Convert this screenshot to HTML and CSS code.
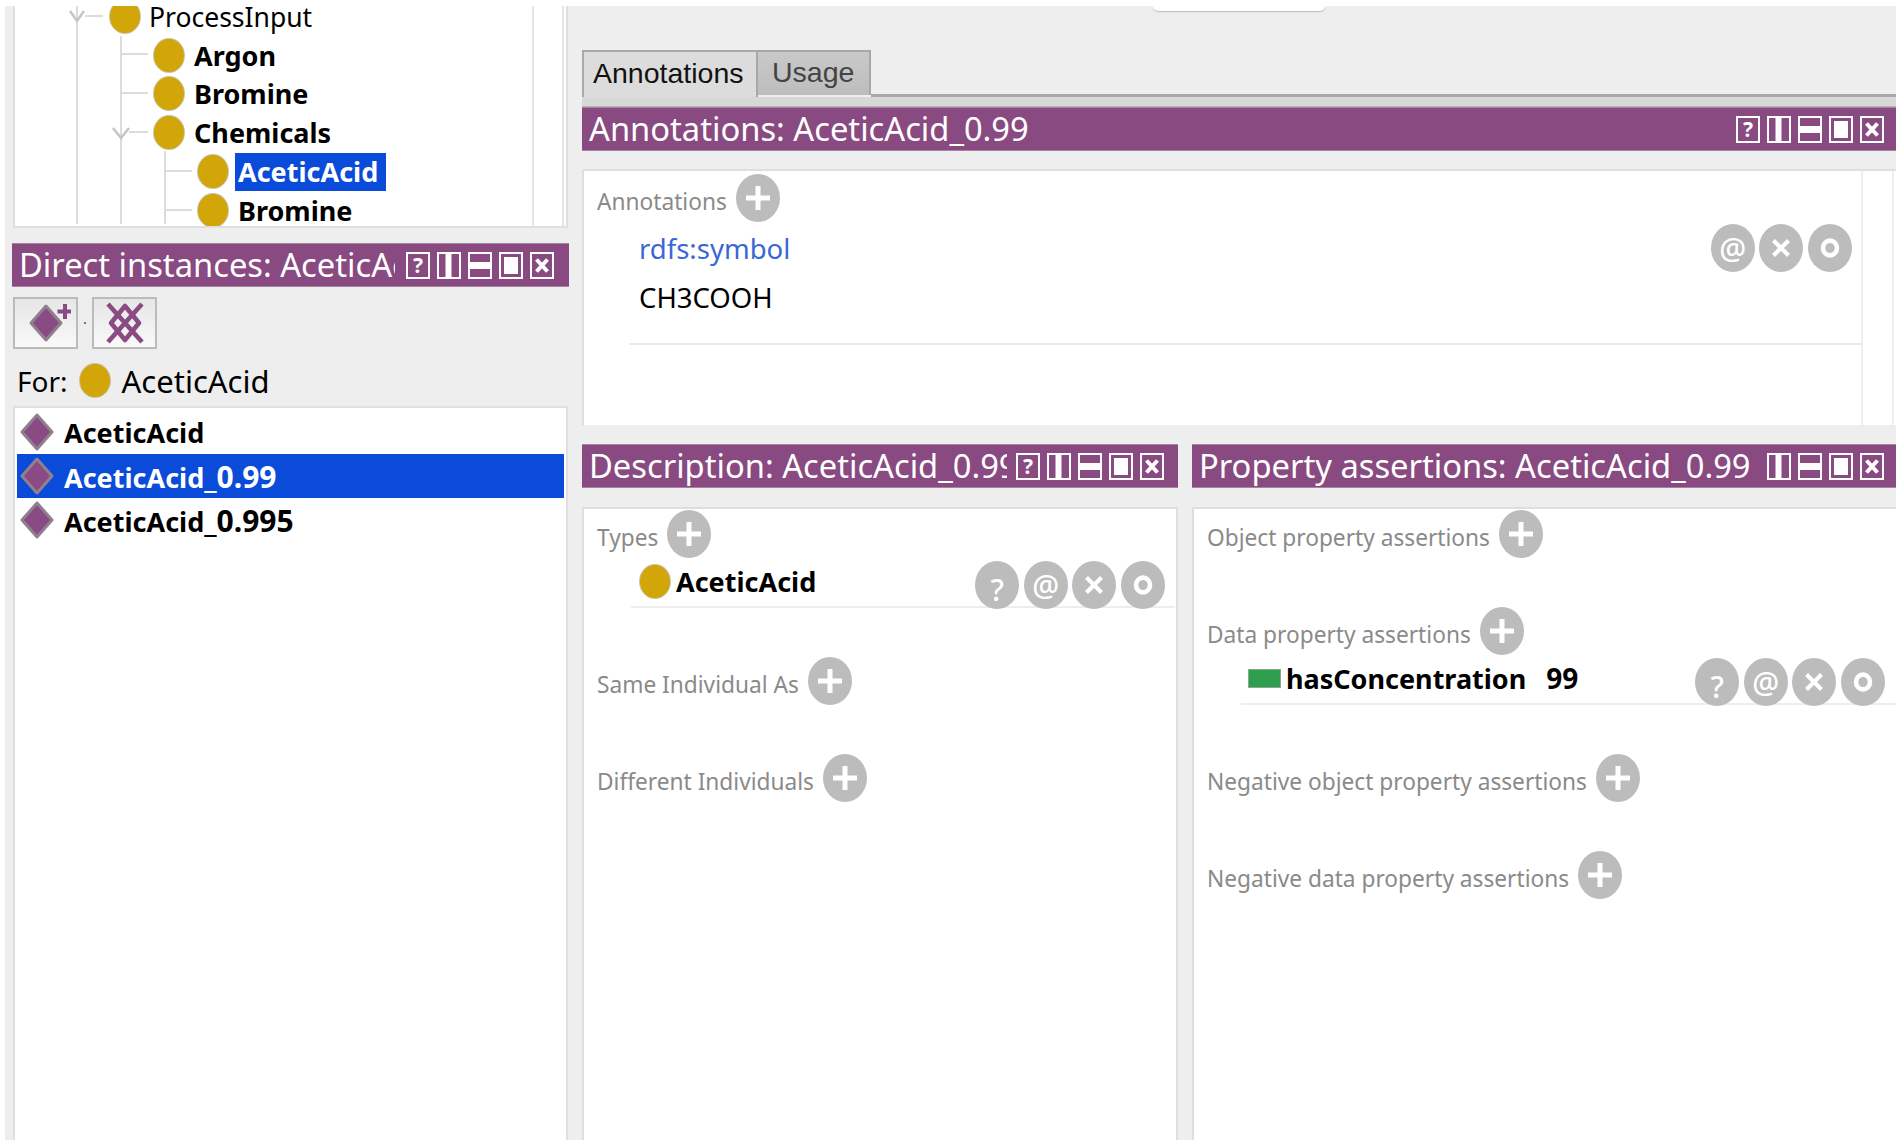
FILE: index.html
```html
<!DOCTYPE html>
<html lang="en">
<head>
<meta charset="utf-8">
<title>Protege individuals</title>
<link rel="stylesheet" href="styles.css">
</head>
<body>
<svg class="defs" width="0" height="0" aria-hidden="true">
  <defs>
    <symbol id="b-help" viewBox="0 0 24 27"><rect x="1" y="1" width="22" height="25" fill="none" stroke="#fff" stroke-width="2"/><text x="12" y="21" text-anchor="middle" class="help-glyph">?</text></symbol>
    <symbol id="b-col" viewBox="0 0 24 27"><rect x="1" y="1" width="22" height="25" fill="none" stroke="#fff" stroke-width="2"/><rect x="8.5" y="2" width="6" height="23" fill="#fff"/></symbol>
    <symbol id="b-row" viewBox="0 0 24 27"><rect x="1" y="1" width="22" height="25" fill="none" stroke="#fff" stroke-width="2"/><rect x="2" y="10" width="20" height="7" fill="#fff"/></symbol>
    <symbol id="b-max" viewBox="0 0 24 27"><rect x="1" y="1" width="22" height="25" fill="none" stroke="#fff" stroke-width="2"/><rect x="5" y="5" width="14" height="17" fill="#fff"/></symbol>
    <symbol id="b-close" viewBox="0 0 24 27"><rect x="1" y="1" width="22" height="25" fill="none" stroke="#fff" stroke-width="2"/><path d="M6.5 7.5 L17.5 19.5 M17.5 7.5 L6.5 19.5" stroke="#fff" stroke-width="4" fill="none"/></symbol>
    <symbol id="p-x" viewBox="0 0 20 20"><path d="M2.5 2.5 L17.5 17.5 M17.5 2.5 L2.5 17.5" stroke="#fff" stroke-width="4.2" fill="none"/></symbol>
    <symbol id="p-o" viewBox="0 0 20 20"><ellipse cx="10" cy="10" rx="7" ry="7.4" stroke="#fff" stroke-width="4.6" fill="none"/></symbol>
    <symbol id="p-plus" viewBox="0 0 26 26"><path d="M13 1 V25 M1 13 H25" stroke="#fff" stroke-width="5" fill="none"/></symbol>
    <symbol id="diamond" viewBox="0 0 36 40"><polygon points="18,3 33,20 18,37 3,20" fill="#8a4b85" stroke="#8f7f8f" stroke-width="3" stroke-linejoin="round"/></symbol>
  </defs>
</svg>

<div class="app">
  <aside class="left">
    <div class="tree">
      <svg class="guides" width="540" height="221" aria-hidden="true">
        <path d="M62 0 V218 M106 30 V218 M150 145 V218 M70 10 H88 M106 48 H133 M106 87 H133 M114 126 H133 M150 165 H177 M150 204 H177" stroke="#dcdcdc" stroke-width="2" fill="none"/>
        <path d="M55 5 L62 15 L69 5 M98 122 L106 132 L114 122" stroke="#c4c4c4" stroke-width="2.4" fill="none"/>
      </svg>
      <div class="tree-row lvl1"><i class="cls"></i><span class="plain">ProcessInput</span></div>
      <div class="tree-row lvl2"><i class="cls"></i><b>Argon</b></div>
      <div class="tree-row lvl2"><i class="cls"></i><b>Bromine</b></div>
      <div class="tree-row lvl2"><i class="cls"></i><b>Chemicals</b></div>
      <div class="tree-row lvl3"><i class="cls"></i><b class="tree-sel">AceticAcid</b></div>
      <div class="tree-row lvl3"><i class="cls"></i><b>Bromine</b></div>
      <div class="tree-edge"></div>
    </div>

    <div class="bar bar-left">
      <span class="bar-title">Direct instances: AceticAcid</span>
      <svg class="bb"><use href="#b-help"/></svg><svg class="bb"><use href="#b-col"/></svg><svg class="bb"><use href="#b-row"/></svg><svg class="bb"><use href="#b-max"/></svg><svg class="bb"><use href="#b-close"/></svg>
    </div>

    <div class="tools">
      <button class="tool" aria-label="Add individual">
        <svg width="50" height="44" viewBox="0 0 50 44"><use href="#diamond" x="7" y="2" width="36" height="40"/><path d="M44 3 V18 M36.5 10.5 H51.5" stroke="#8a4b85" stroke-width="4" fill="none"/></svg>
      </button>
      <span class="tool-dot"></span>
      <button class="tool" aria-label="Delete individual">
        <svg width="38" height="42" viewBox="0 0 38 42"><path d="M2 2 L36 40 M2 40 L36 2" stroke="#8a4b85" stroke-width="4.6" fill="none"/><polygon points="19,4 33,21 19,38 5,21" stroke="#8a4b85" stroke-width="4.6" fill="none" stroke-linejoin="round"/></svg>
      </button>
    </div>

    <div class="for"><span class="for-lbl">For:</span><i class="cls"></i><span>AceticAcid</span></div>

    <ul class="list">
      <li class="ind"><svg class="dia"><use href="#diamond"/></svg><b>AceticAcid</b></li>
      <li class="ind ind-sel"><svg class="dia"><use href="#diamond"/></svg><b class="light">AceticAcid<span class="dg">_0.99</span></b></li>
      <li class="ind"><svg class="dia"><use href="#diamond"/></svg><b>AceticAcid<span class="dg">_0.995</span></b></li>
    </ul>
  </aside>

  <main class="right">
    <div class="knob"></div>
    <div class="tabs">
      <div class="tab tab-on">Annotations</div>
      <div class="tab">Usage</div>
      <div class="tab-fill"></div>
    </div>
    <div class="tab-strip"></div>

    <div class="bar bar-wide">
      <span class="bar-title">Annotations: AceticAcid_0.99</span>
      <svg class="bb"><use href="#b-help"/></svg><svg class="bb"><use href="#b-col"/></svg><svg class="bb"><use href="#b-row"/></svg><svg class="bb"><use href="#b-max"/></svg><svg class="bb"><use href="#b-close"/></svg>
    </div>

    <section class="annot">
      <div class="annot-main">
        <div class="head"><span class="lbl">Annotations</span><span class="pill plus"><svg><use href="#p-plus"/></svg></span></div>
        <div class="annot-row">
          <div class="annot-text">
            <div class="prop">rdfs:symbol</div>
            <div class="val">CH3COOH</div>
          </div>
          <div class="pills">
            <span class="pill">@</span>
            <span class="pill"><svg class="gl"><use href="#p-x"/></svg></span>
            <span class="pill"><svg class="gl"><use href="#p-o"/></svg></span>
          </div>
        </div>
      </div>
      <div class="annot-scroll"></div>
    </section>

    <div class="lower">
      <div class="pane pane-desc">
        <div class="bar bar-desc">
          <span class="bar-title">Description: AceticAcid_0.99</span>
          <svg class="bb"><use href="#b-help"/></svg><svg class="bb"><use href="#b-col"/></svg><svg class="bb"><use href="#b-row"/></svg><svg class="bb"><use href="#b-max"/></svg><svg class="bb"><use href="#b-close"/></svg>
        </div>
        <div class="card">
          <div class="sec">
            <div class="head"><span class="lbl">Types</span><span class="pill plus"><svg><use href="#p-plus"/></svg></span></div>
            <div class="frame frame-type">
              <i class="cls"></i><b>AceticAcid</b>
              <div class="pills">
                <span class="pill low">?</span>
                <span class="pill">@</span>
                <span class="pill"><svg class="gl"><use href="#p-x"/></svg></span>
                <span class="pill"><svg class="gl"><use href="#p-o"/></svg></span>
              </div>
            </div>
          </div>
          <div class="sec">
            <div class="head"><span class="lbl">Same Individual As</span><span class="pill plus"><svg><use href="#p-plus"/></svg></span></div>
          </div>
          <div class="sec">
            <div class="head"><span class="lbl">Different Individuals</span><span class="pill plus"><svg><use href="#p-plus"/></svg></span></div>
          </div>
        </div>
      </div>

      <div class="pane pane-prop">
        <div class="bar bar-prop">
          <span class="bar-title">Property assertions: AceticAcid_0.99</span>
          <svg class="bb"><use href="#b-col"/></svg><svg class="bb"><use href="#b-row"/></svg><svg class="bb"><use href="#b-max"/></svg><svg class="bb"><use href="#b-close"/></svg>
        </div>
        <div class="card">
          <div class="sec">
            <div class="head"><span class="lbl">Object property assertions</span><span class="pill plus"><svg><use href="#p-plus"/></svg></span></div>
          </div>
          <div class="sec">
            <div class="head"><span class="lbl">Data property assertions</span><span class="pill plus"><svg><use href="#p-plus"/></svg></span></div>
            <div class="frame frame-data">
              <i class="dp"></i><b>hasConcentration</b><b class="num">99</b>
              <div class="pills">
                <span class="pill low">?</span>
                <span class="pill">@</span>
                <span class="pill"><svg class="gl"><use href="#p-x"/></svg></span>
                <span class="pill"><svg class="gl"><use href="#p-o"/></svg></span>
              </div>
            </div>
          </div>
          <div class="sec">
            <div class="head"><span class="lbl">Negative object property assertions</span><span class="pill plus"><svg><use href="#p-plus"/></svg></span></div>
          </div>
          <div class="sec">
            <div class="head"><span class="lbl">Negative data property assertions</span><span class="pill plus"><svg><use href="#p-plus"/></svg></span></div>
          </div>
        </div>
      </div>
    </div>
  </main>
</div>
</body>
</html>
```

FILE: styles.css
```css
* { box-sizing: border-box; }
html, body { margin: 0; padding: 0; background: #fff; }
body { font-family: "Noto Sans", "Open Sans", sans-serif; color: #000; overflow: hidden; }
.defs { position: absolute; }
.help-glyph { font: 700 21px "Noto Sans", sans-serif; fill: #fff; }

.app { width: 1891px; height: 1134px; margin: 6px 0 0 5px; background: #eee; display: flex; overflow: hidden; }

/* left column */
.left { width: 564px; padding-left: 8px; display: flex; flex-direction: column; flex: none; }
.tree { position: relative; height: 222px; background: #fff; border: 2px solid #e0e0e0; border-top: 0; overflow: hidden; flex: none; width: 555px; font-size: 27px; }
.guides { position: absolute; left: 0; top: 0; }
.tree-edge { position: absolute; right: 2px; top: 0; bottom: 0; width: 32px; border-left: 2px solid #e6e6e6; border-right: 2px solid #e6e6e6; }
.tree-row { position: relative; height: 38.8px; display: flex; align-items: center; white-space: nowrap; }
.tree-row:first-of-type { margin-top: -9px; }
.lvl1 { padding-left: 95px; }
.lvl2 { padding-left: 139px; }
.lvl3 { padding-left: 183px; }
.tree-row .cls { margin-right: 10px; }
.plain { font-weight: 400; font-size: 26.5px; margin: 3px 0 0 -1px; line-height: 1.2; }
.tree-sel { background: #0a4bd9; color: #fff; height: 38px; padding: 0 8px 0 3px; margin-left: -3px; display: flex; align-items: center; }

i { display: block; flex: none; }
.cls { width: 30px; height: 33px; border-radius: 50%; background: #d2a508; box-shadow: 0 0 0 1px #c9c4ae; }

b { font-weight: 700; }

/* title bars */
.bar { height: 44px; background: #884a80; color: #fff; display: flex; align-items: center; border-top: 1px solid #a584a0; border-bottom: 1px solid #a584a0; flex: none; }
.bar-title { flex: 1; min-width: 0; overflow: hidden; white-space: nowrap; font-size: 32.7px; padding-left: 7px; line-height: 42px; }
.bb { width: 24px; height: 27px; margin-left: 7px; flex: none; }
.bar-left { margin: 15px 0 0 -1px; width: 557px; padding-right: 15px; }
.bar-left .bar-title { margin-right: 4px; }
.bar-wide { padding-right: 12px; }
.bar-desc { padding-right: 14px; }
.bar-desc .bar-title { margin-right: 2px; }
.bar-prop { padding-right: 12px; }

/* toolbar */
.tools { display: flex; align-items: center; margin-top: 10px; height: 52px; flex: none; }
.tool { width: 65px; height: 52px; padding: 0; border: 2px solid #bbb; background: linear-gradient(#e6e6e6, #f9f9f9); display: flex; align-items: center; justify-content: center; }
.tool-dot { width: 2px; height: 2px; margin: 0 6px; background: #777; }

.for { display: flex; align-items: center; height: 57px; padding: 7px 0 0 4px; font-size: 31px; flex: none; line-height: 1; }
.for-lbl { font-size: 28px; }
.for .cls { margin: -2px 12px 0 12px; }

.list { list-style: none; margin: 0; padding: 2px 2px 0; flex: 1; width: 555px; background: #fff; border: 2px solid #e0e0e0; border-bottom: 0; font-size: 27px; }
.ind { height: 44px; display: flex; align-items: center; padding-left: 2px; }
.ind-sel { background: #0a4bd9; }
.light { color: #fff; }
.dg { font-size: 30px; }
.dia { width: 36px; height: 40px; margin-right: 9px; flex: none; }

/* right column */
.right { position: relative; flex: 1; min-width: 0; margin-left: 13px; display: flex; flex-direction: column; }
.knob { position: absolute; left: 571px; top: 0; width: 172px; height: 5px; background: #fff; border-radius: 0 0 9px 9px; box-shadow: 0 1px 1px #bdbdbd; }

.tabs { display: flex; align-items: flex-end; height: 47px; margin-top: 44px; flex: none; }
.tab { height: 45px; background: linear-gradient(#c9c9c9, #bdbdbd); border: 2px solid #a8a8a8; border-bottom: 0; padding: 0 14px 2px; font: 400 28.5px "Liberation Sans", sans-serif; color: #444; display: flex; align-items: center; }
.tab-on { height: 47px; width: 176px; background: #dcdcdc; color: #111; padding-left: 9px; }
.tab:not(.tab-on) { width: 113px; border-left: 0; margin-bottom: 2px; }
.tab-fill { flex: 1; height: 3px; background: #a9a9a9; align-self: flex-end; }
.tab-strip { height: 10px; background: #d8d8d8; border-bottom: 1px solid #b5b5b5; flex: none; }

.annot { height: 256px; margin-top: 18px; flex: none; display: flex; background: #fff; border-top: 2px solid #dedede; border-left: 2px solid #dedede; }
.annot-main { flex: 1; min-width: 0; border-bottom: 2px solid #fff; }
.annot-scroll { width: 33px; flex: none; margin-right: 2px; border-left: 2px solid #eee; border-right: 2px solid #eee; }

.head { display: flex; align-items: center; height: 48px; padding-left: 13px; }
.annot-main .head { margin-top: 3px; }
.lbl { font-size: 22.7px; color: #8a8a8a; margin-top: 6px; }
.pill { width: 44px; height: 48px; border-radius: 50%; background: #bcbcbc; color: #fff; display: flex; align-items: center; justify-content: center; font-size: 30px; font-weight: 500; flex: none; }
.pill svg { width: 26px; height: 26px; }
.pill .gl { width: 20px; height: 20px; }
.plus { margin-left: 9px; }
.low { padding-top: 8px; }
.pills { display: flex; gap: 4.6px; margin-left: auto; }

.annot-row { display: flex; align-items: flex-start; height: 123px; margin-left: 45px; border-bottom: 2px solid #e9e9e9; padding-right: 9px; padding-top: 4px; }
.annot-text { padding-left: 10px; font-size: 27.5px; }
.prop { color: #3b67d6; height: 49px; line-height: 46px; }
.val { height: 48px; line-height: 46px; }
.annot-row .pills { margin-top: -2px; }

.lower { display: flex; gap: 14px; margin-top: 19px; flex: 1; min-height: 0; }
.pane { display: flex; flex-direction: column; min-width: 0; }
.pane-desc { width: 596px; flex: none; }
.pane-prop { flex: 1; }
.card { flex: 1; margin-top: 19px; background: #fff; border-top: 2px solid #dedede; border-left: 2px solid #dedede; padding-top: 1px; }
.pane-desc .card { border-right: 2px solid #dedede; }
.sec { margin-bottom: 49px; }

.frame { display: flex; align-items: center; height: 50px; margin-left: 47px; border-bottom: 2px solid #ededed; font-size: 27px; padding-bottom: 2px; }
.frame .pills { align-self: flex-start; margin-top: 3px; }
.frame-type { padding-left: 9px; padding-right: 10px; margin-right: 1px; }
.frame-type .cls { margin-right: 6px; }
.frame-data { padding-left: 7px; padding-right: 11px; }
.dp { width: 33px; height: 19px; margin-right: 5px; background: #2f9e4f; border: 1px solid #8aa98f; }
.num { margin-left: 20px; font-size: 28px; }
```
